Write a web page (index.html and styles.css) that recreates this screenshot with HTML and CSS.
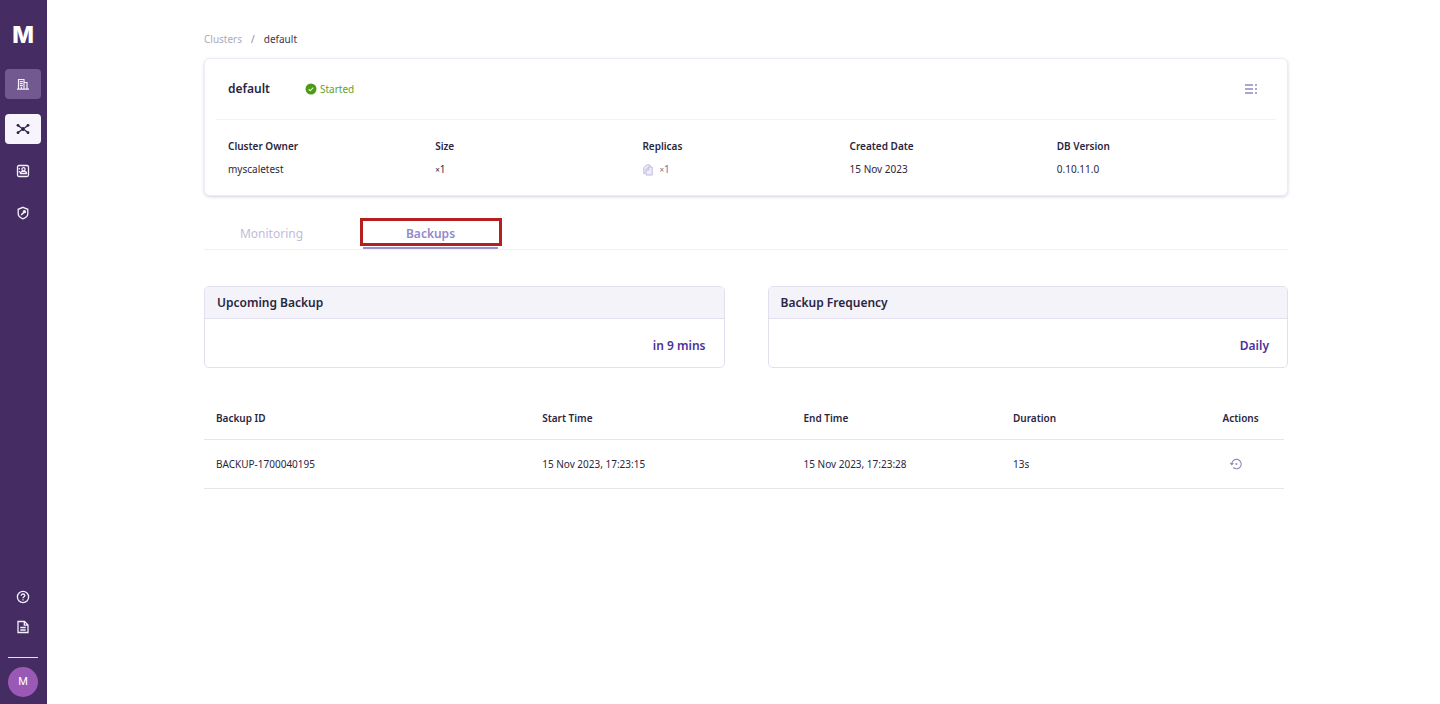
FILE: index.html
```html
<!DOCTYPE html>
<html lang="en">
<head>
    <meta charset="UTF-8">
    <meta name="viewport" content="width=device-width, initial-scale=1.0">
    <title>Clusters / default</title>
    <link rel="stylesheet" href="styles.css">
</head>
<body>
    <aside class="sidebar">
        <a class="logo" href="#">M</a>
        <nav class="side-nav">
            <a class="side-link side-link-org" href="#" aria-label="Organization">
                <svg viewBox="0 0 14 14" width="14" height="14" fill="none" stroke="currentColor" stroke-width="1.200">
                    <path d="M2.500 12V2.500h5.500V12M8 5.500h3V12M1 12.200h12M3.800 4.700h3M3.800 6.700h3M3.800 8.700h3M5.300 10v2"/>
                </svg>
            </a>
            <a class="side-link side-link-active" href="#" aria-label="Clusters">
                <svg viewBox="0 0 14 14" width="14" height="14" fill="currentColor" stroke="currentColor">
                    <path d="M2 3.500L5.500 6M12 3.500L8.500 6M2 10.500L5.500 8M12 10.500L8.500 8" stroke-width="1.300"/>
                    <circle cx="7" cy="7" r="2" stroke="none"/>
                    <circle cx="2" cy="3.300" r="1.400" stroke="none"/>
                    <circle cx="12" cy="3.300" r="1.400" stroke="none"/>
                    <circle cx="2" cy="10.700" r="1.400" stroke="none"/>
                    <circle cx="12" cy="10.700" r="1.400" stroke="none"/>
                </svg>
            </a>
            <a class="side-link" href="#" aria-label="Members">
                <svg viewBox="0 0 14 14" width="14" height="14" fill="none" stroke="currentColor" stroke-width="1.300">
                    <rect x="1.500" y="1.500" width="11" height="11" rx="1.500"/>
                    <circle cx="7.500" cy="5.300" r="1.600"/>
                    <path d="M4.500 9.500V8.800c0-1 1-1.400 3-1.400s3 .5 3 1.400v.7zM3.300 4v1.500M3.300 7v1.500"/>
                </svg>
            </a>
            <a class="side-link" href="#" aria-label="Security">
                <svg viewBox="0 0 14 14" width="14" height="14" fill="none" stroke="currentColor" stroke-width="1.300">
                    <path d="M7 1.300l4.800 2v4.200c0 2.600-2 4.300-4.800 5.300-2.800-1-4.800-2.700-4.800-5.300V3.300z"/>
                    <path d="M5.200 9l3.300-3.300" stroke-width="1.600"/>
                    <circle cx="8.400" cy="5.700" r="1" fill="currentColor"/>
                </svg>
            </a>
        </nav>
        <nav class="side-footer">
            <a class="foot-link" href="#" aria-label="Help">
                <svg viewBox="0 0 14 14" width="14" height="14" fill="none" stroke="currentColor" stroke-width="1.300">
                    <circle cx="7" cy="7" r="5.600"/>
                    <path d="M5.200 5.700c0-1 .8-1.700 1.800-1.700s1.800.7 1.800 1.600c0 1.200-1.800 1.300-1.800 2.600M7 9.200v1.300"/>
                </svg>
            </a>
            <a class="foot-link" href="#" aria-label="Documentation">
                <svg viewBox="0 0 14 14" width="14" height="14" fill="none" stroke="currentColor" stroke-width="1.300">
                    <path d="M2 1.500h6.500L12 5v7.500H2zM8.300 1.700v3.500H12M4.300 7.500h5.400M4.300 10h5.400"/>
                </svg>
            </a>
            <div class="foot-line"></div>
            <button class="avatar" type="button" aria-label="Account">M</button>
        </nav>
    </aside>

    <main class="content">
        <nav class="breadcrumb">
            <a href="#">Clusters</a>
            <span class="slash">/</span>
            <span class="current">default</span>
        </nav>

        <section class="cluster-card">
            <header class="cluster-head">
                <h1>default</h1>
                <span class="status">
                    <svg viewBox="0 0 12 12" width="12" height="12">
                        <circle cx="6" cy="6" r="5.500" fill="#4c9a17"/>
                        <path d="M3.700 6.200l1.600 1.500 3-3" fill="none" stroke="#d9f2c4" stroke-width="1.200"/>
                    </svg>
                    Started
                </span>
                <button class="icon-btn menu-btn" type="button" aria-label="Cluster actions">
                    <svg viewBox="0 0 14 14" width="14" height="14" fill="none" stroke="currentColor" stroke-width="1.400">
                        <path d="M1 3h8M1 7h8M1 11h8M11 3h2M11 7h2M11 11h2"/>
                    </svg>
                </button>
            </header>
            <dl class="cluster-info">
                <div>
                    <dt>Cluster Owner</dt>
                    <dd>myscaletest</dd>
                </div>
                <div>
                    <dt>Size</dt>
                    <dd><span class="times">×</span>1</dd>
                </div>
                <div>
                    <dt>Replicas</dt>
                    <dd class="replicas">
                        <svg viewBox="0 0 12 12" width="12" height="12" fill="#efecf9" stroke="#beb7e0">
                            <path d="M3 9.500H1.800V3.800L4.500 1H8v1.500"/>
                            <path d="M4 11V5.700L6.500 3h3.700v8zM4 6h2.700V3"/>
                        </svg>
                        <span><span class="times">×</span>1</span>
                    </dd>
                </div>
                <div>
                    <dt>Created Date</dt>
                    <dd>15 Nov 2023</dd>
                </div>
                <div>
                    <dt>DB Version</dt>
                    <dd>0.10.11.0</dd>
                </div>
            </dl>
        </section>

        <div class="tabs" role="tablist">
            <button class="tab" type="button" role="tab" aria-selected="false">Monitoring</button>
            <button class="tab tab-active" type="button" role="tab" aria-selected="true">Backups</button>
        </div>

        <div class="panels">
            <section class="panel">
                <h2>Upcoming Backup</h2>
                <p>in 9 mins</p>
            </section>
            <section class="panel">
                <h2>Backup Frequency</h2>
                <p>Daily</p>
            </section>
        </div>

        <div class="table-wrap">
            <table class="backups">
                <thead>
                    <tr>
                        <th class="col-id">Backup ID</th>
                        <th class="col-start">Start Time</th>
                        <th class="col-end">End Time</th>
                        <th class="col-duration">Duration</th>
                        <th>Actions</th>
                    </tr>
                </thead>
                <tbody>
                    <tr>
                        <td>BACKUP-1700040195</td>
                        <td>15 Nov 2023, 17:23:15</td>
                        <td>15 Nov 2023, 17:23:28</td>
                        <td>13s</td>
                        <td class="actions">
                            <button class="icon-btn restore-btn" type="button" aria-label="Restore">
                                <svg viewBox="0 0 12 12" width="12" height="12" fill="none" stroke="currentColor" stroke-width="1.100">
                                    <path d="M1.800 6.500a4.700 4.700 0 1 1 1.500 3M.2 4.900l1.600 1.800 1.700-1.500"/>
                                    <circle cx="6.400" cy="6" r="1" fill="currentColor" stroke="none"/>
                                </svg>
                            </button>
                        </td>
                    </tr>
                </tbody>
            </table>
        </div>
    </main>
</body>
</html>
```
FILE: styles.css
```css
* {
    box-sizing: border-box;
}
body {
    margin: 0;
    min-height: 100vh;
    display: flex;
    background-color: #fff;
    color: #2a2640;
    font-family: "Noto Sans", "Open Sans", sans-serif;
    font-size: 10px;
    line-height: 16px;
}
a {
    color: inherit;
    text-decoration: none;
}
button {
    font: inherit;
    border: 0;
    padding: 0;
    background: none;
    cursor: pointer;
}
svg {
    display: block;
}

/* sidebar */
.sidebar {
    flex: 0 0 47px;
    display: flex;
    flex-direction: column;
    align-items: center;
    padding: 22px 1px 7px 0;
    background-color: #452d63;
    color: #f4effa;
}
.logo {
    font-family: Inter, sans-serif;
    font-size: 23px;
    font-weight: 800;
    line-height: 26px;
    color: #fff;
}
.side-nav {
    display: flex;
    flex-direction: column;
    gap: 12px;
    margin-top: 21px;
}
.side-link {
    display: flex;
    align-items: center;
    justify-content: center;
    width: 36px;
    height: 30px;
    border-radius: 4px;
}
.side-link-org {
    margin-bottom: 3px;
    background-color: #72598f;
}
.side-link-active {
    background-color: #f7f4fd;
    color: #2c2144;
}
.side-footer {
    display: flex;
    flex-direction: column;
    align-items: center;
    gap: 16px;
    margin-top: auto;
}
.foot-line {
    width: 30px;
    height: 1px;
    margin-top: 7px;
    background-color: #e6dff0;
}
.avatar {
    width: 30px;
    height: 30px;
    margin-top: -7px;
    border-radius: 50%;
    background-color: #9b59b6;
    color: #fff;
    font-family: Roboto, sans-serif;
    font-size: 11px;
}

/* page */
.content {
    flex: 1;
    padding: 31px 152px 0 157px;
}
.breadcrumb {
    display: flex;
    gap: 9px;
    color: #aeaab8;
}
.breadcrumb .slash {
    color: #8d899b;
}
.breadcrumb .current {
    color: #3a3651;
}
.cluster-card {
    margin-top: 11px;
    padding: 0 11px;
    border: 1px solid #edebf5;
    border-radius: 6px;
    box-shadow: 0 1px 3px rgba(80, 70, 150, 0.25);
}
.cluster-head {
    display: flex;
    align-items: center;
    height: 61px;
    padding: 0 18px 0 12px;
    border-bottom: 1px solid #f3f2f6;
}
.cluster-head h1 {
    margin: 0;
    font-size: 12px;
    font-weight: 600;
}
.status {
    display: flex;
    align-items: center;
    gap: 3px;
    margin-left: 35px;
    color: #5ba32b;
}
.icon-btn {
    color: #918bb8;
}
.menu-btn {
    margin-left: auto;
}
.cluster-info {
    display: grid;
    grid-template-columns: repeat(5, 1fr);
    margin: 0;
    padding: 18px 12px 17px;
}
.cluster-info dt {
    font-weight: 600;
}
.cluster-info dd {
    margin: 7px 0 0;
}
.times {
    font-size: 8px;
}
.cluster-info .replicas {
    display: flex;
    align-items: center;
    gap: 5px;
    color: #77738a;
}

/* tabs */
.tabs {
    display: flex;
    gap: 24px;
    margin-top: 23px;
    border-bottom: 1px solid #f1f0f5;
}
.tab {
    width: 135px;
    height: 30px;
    font-size: 12px;
    color: #c1bcd9;
}
.tab-active {
    position: relative;
    font-weight: 600;
    color: #9288cb;
    border-bottom: 2px solid #9b90d0;
    padding-top: 2px;
}
.tab-active::after {
    content: "";
    position: absolute;
    top: -1px;
    right: -4px;
    bottom: 1px;
    left: -3px;
    border: 3px solid #b5201f;
}

/* backup panels */
.panels {
    display: grid;
    grid-template-columns: 1fr 1fr;
    gap: 43px;
    margin-top: 36px;
}
.panel {
    border: 1px solid #e2e0ee;
    border-radius: 5px;
    overflow: hidden;
}
.panel h2 {
    margin: 0;
    padding: 8px 12px 7px;
    border-bottom: 1px solid #e2e0ee;
    background-color: #f4f3fa;
    font-size: 12px;
    font-weight: 600;
}
.panel p {
    margin: 0;
    padding: 19px 18px 13px;
    text-align: right;
    font-size: 12px;
    font-weight: 600;
    color: #4b329b;
}

/* backup table */
.table-wrap {
    margin-top: 29px;
    padding-right: 4px;
}
.backups {
    width: 100%;
    table-layout: fixed;
    border-collapse: collapse;
}
.backups th,
.backups td {
    padding: 0 0 0 12px;
    border-bottom: 1px solid #e6e5ec;
    text-align: left;
}
.backups th {
    height: 42px;
    font-weight: 600;
}
.backups td {
    height: 49px;
}
.col-id {
    width: 30.2%;
}
.col-start {
    width: 24.2%;
}
.col-end,
.col-duration {
    width: 19.4%;
}
.backups .actions {
    padding-left: 19px;
}
.restore-btn {
    display: block;
}
```
